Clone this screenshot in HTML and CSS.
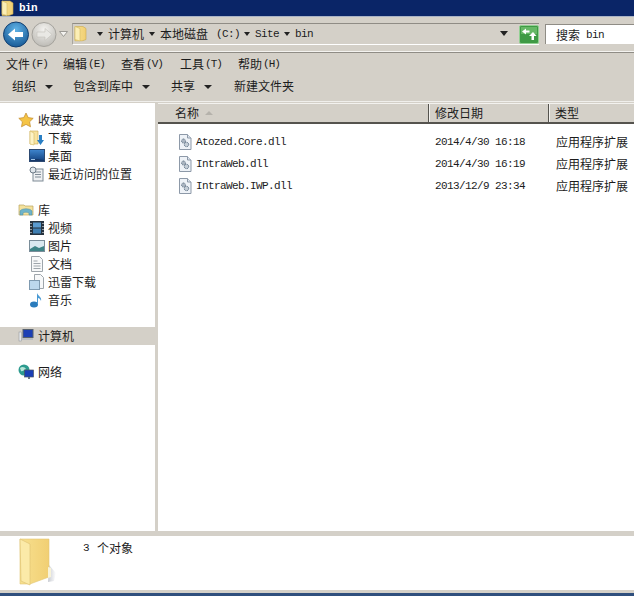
FILE: index.html
```html
<!DOCTYPE html>
<html lang="zh-CN">
<head>
<meta charset="utf-8">
<title>bin</title>
<link rel="stylesheet" href="styles.css">
</head>
<body>
<svg class="defs" width="0" height="0" aria-hidden="true">
  <defs>
    <linearGradient id="fold" x1="0" x2="1" y1="0" y2="0"><stop offset="0" stop-color="#f7e08f"/><stop offset="1" stop-color="#f1cf73"/></linearGradient>
    <linearGradient id="shadow" x1="0" x2="1" y1="0" y2="0"><stop offset="0" stop-color="#c9ccd3"/><stop offset="1" stop-color="#ffffff"/></linearGradient>
    <linearGradient id="desk" x1="0" x2="0" y1="0" y2="1"><stop offset="0" stop-color="#3f86cf"/><stop offset="1" stop-color="#123f7c"/></linearGradient>
    <radialGradient id="blue" cx=".5" cy=".3" r=".8"><stop offset="0" stop-color="#5fb2e6"/><stop offset="1" stop-color="#0f4f8c"/></radialGradient>
    <radialGradient id="grey" cx=".5" cy=".3" r=".8"><stop offset="0" stop-color="#f4f3f0"/><stop offset="1" stop-color="#b5b3ad"/></radialGradient>
    <symbol id="dll" viewBox="0 0 14 16">
      <path d="M1.500 .5h8l3.500 3.500v11.500h-11.500z" fill="#eef2f7" stroke="#8d99a8"/>
      <path d="M9.500 .5v3.500h3.500" fill="#dfe6ee" stroke="#8d99a8"/>
      <circle cx="5.500" cy="7" r="2" fill="#aab5c1" stroke="#5f7183" stroke-dasharray="1 .6"/>
      <circle cx="8.500" cy="10.500" r="2.200" fill="#c5ced7" stroke="#51667c" stroke-dasharray="1 .6"/>
    </symbol>
    <symbol id="smallfolder" viewBox="0 0 14 16">
      <path d="M1 1h8l3 2v11l-4 1.500H1z" fill="url(#fold)" stroke="#c9a94e" stroke-width=".6"/>
      <path d="M1 1l5 2v12.500l-5-1.500z" fill="#fbeeb5" stroke="#d4b862" stroke-width=".6"/>
    </symbol>
  </defs>
</svg>
<div class="window">
  <header class="titlebar">
    <svg class="title-icon" width="14" height="16" viewBox="0 0 14 16"><use href="#smallfolder"/></svg>
    <span class="title-text">bin</span>
  </header>

  <div class="addressbar">
    <svg class="nav-icon" width="26" height="27" viewBox="0 0 26 27">
      <circle cx="13" cy="13.500" r="12.500" fill="url(#blue)" stroke="#123f70"/>
      <path d="M5 13.500l7-6v3.500h8v5h-8v3.500z" fill="#fff"/>
    </svg>
    <svg class="nav-icon fwd" width="26" height="27" viewBox="0 0 26 27">
      <circle cx="13" cy="13.500" r="12" fill="url(#grey)" stroke="#a5a39d"/>
      <path d="M21 13.500l-7-6v3.500H6v5h8v3.500z" fill="#e9e8e4" stroke="#c3c1bb" stroke-width=".6"/>
    </svg>
    <svg class="nav-drop" width="9" height="6" viewBox="0 0 9 6"><path d="M.5.500h8l-4 5z" fill="#f4f3f0" stroke="#9c9a95"/></svg>
    <div class="crumbs">
      <svg class="crumb-folder" width="14" height="17" viewBox="0 0 14 16"><use href="#smallfolder"/></svg>
      <span class="arrow first"></span><span class="cjk">计算机</span>
      <span class="arrow"></span><span class="cjk">本地磁盘</span><span class="lat drive">(C:)</span>
      <span class="arrow"></span><span class="lat">Site</span>
      <span class="arrow"></span><span class="lat">bin</span>
      <span class="arrow end"></span>
      <svg class="refresh" width="20" height="19" viewBox="0 0 20 19">
        <rect x=".5" y=".5" width="19" height="18" rx="1.500" fill="#3f9a45" stroke="#93d093"/>
        <rect x="2" y="2" width="16" height="7" fill="#66b866"/>
        <path d="M3 6.500l4-3v2h3.500v2H7v2z" fill="#fff"/>
        <path d="M14 7l3.500 4H15v4h-2.500v-4H10z" fill="#fff"/>
      </svg>
    </div>
    <div class="searchbox"><span class="cjk">搜索</span><span class="lat search-term">bin</span></div>
  </div>

  <nav class="menubar">
    <span class="menu-item m1"><span class="cjk">文件</span><span class="lat">(F)</span></span>
    <span class="menu-item m2"><span class="cjk">编辑</span><span class="lat">(E)</span></span>
    <span class="menu-item m3"><span class="cjk">查看</span><span class="lat">(V)</span></span>
    <span class="menu-item m4"><span class="cjk">工具</span><span class="lat">(T)</span></span>
    <span class="menu-item"><span class="cjk">帮助</span><span class="lat">(H)</span></span>
  </nav>

  <div class="toolbar">
    <span class="tool t1"><span class="cjk">组织</span><span class="arrow big"></span></span>
    <span class="tool t2"><span class="cjk">包含到库中</span><span class="arrow big"></span></span>
    <span class="tool t3"><span class="cjk">共享</span><span class="arrow big"></span></span>
    <span class="tool"><span class="cjk">新建文件夹</span></span>
  </div>

  <div class="main">
    <aside class="sidebar">
      <div class="tree-group favs">
        <div class="tree-head">
          <svg class="tree-icon" width="16" height="16" viewBox="0 0 16 16"><path d="M8 1l2.200 4.600 5 .7-3.600 3.500.9 5L8 12.400 3.500 14.800l.9-5L.8 6.300l5-.7z" fill="#f5c445" stroke="#c08a2c" stroke-width=".7"/></svg>
          <span class="cjk">收藏夹</span>
        </div>
        <div class="tree-child">
          <svg class="tree-icon" width="16" height="16" viewBox="0 0 16 16"><path d="M1 1h8v13H1z" fill="#f7e3a0" stroke="#c9a94e" stroke-width=".6"/><path d="M1 1l4 2v12l-4-1z" fill="#fdf3c6" stroke="#d4b862" stroke-width=".6"/><path d="M10 5h3v5h2l-3.500 5L8 10h2z" fill="#2a7fc4"/></svg>
          <span class="cjk">下载</span>
        </div>
        <div class="tree-child">
          <svg class="tree-icon" width="16" height="16" viewBox="0 0 16 16"><rect x=".5" y="1.500" width="15" height="12" fill="url(#desk)" stroke="#2d4a72"/><path d="M1 13l1-2h6l7 1v1z" fill="#16386a"/><path d="M2 11.500h4" stroke="#9fc2e6"/></svg>
          <span class="cjk">桌面</span>
        </div>
        <div class="tree-child">
          <svg class="tree-icon" width="16" height="16" viewBox="0 0 16 16"><rect x="4" y="3" width="10" height="12" fill="#eef0f2" stroke="#7f8b96"/><path d="M6 6h6M6 8.500h6M6 11h6" stroke="#7f8b96"/><circle cx="4" cy="4" r="3" fill="#dfe5ea" stroke="#6d7b88"/></svg>
          <span class="cjk">最近访问的位置</span>
        </div>
      </div>

      <div class="tree-group libs">
        <div class="tree-head">
          <svg class="tree-icon" width="16" height="16" viewBox="0 0 16 16"><path d="M1 3h5l1 1h8v9H1z" fill="#f4e29d" stroke="#b9a55f" stroke-width=".7"/><path d="M2 13V9c2-3 10-3 12 0v4h-3v-2c-1-1-5-1-6 0v2z" fill="#6fb3c9" stroke="#4b8ca3" stroke-width=".5"/></svg>
          <span class="cjk">库</span>
        </div>
        <div class="tree-child">
          <svg class="tree-icon" width="16" height="16" viewBox="0 0 16 16"><rect x="1" y="1" width="14" height="14" fill="#26333f"/><rect x="4" y="2.500" width="8" height="5" fill="#5a9bd0"/><rect x="4" y="8.500" width="8" height="5" fill="#3f7fb2"/><path d="M2 3v1M2 6v1M2 9v1M2 12v1M14 3v1M14 6v1M14 9v1M14 12v1" stroke="#fff"/></svg>
          <span class="cjk">视频</span>
        </div>
        <div class="tree-child">
          <svg class="tree-icon" width="16" height="16" viewBox="0 0 16 16"><rect x=".5" y="2.500" width="15" height="11" fill="#d9e8ef" stroke="#7a8d99"/><path d="M1 11l5-3 4 2 5-2v5H1z" fill="#3e8487"/></svg>
          <span class="cjk">图片</span>
        </div>
        <div class="tree-child">
          <svg class="tree-icon" width="16" height="16" viewBox="0 0 16 16"><path d="M2.500.5h8l3 3v12h-11z" fill="#f7f8f9" stroke="#9ea5ab"/><path d="M4.500 5h4M4.500 7.500h7M4.500 10h7M4.500 12.500h7" stroke="#9ea5ab"/></svg>
          <span class="cjk">文档</span>
        </div>
        <div class="tree-child">
          <svg class="tree-icon" width="16" height="16" viewBox="0 0 16 16"><path d="M5.500.5h6l3 3v11h-9z" fill="#f7f8f9" stroke="#9ea5ab"/><rect x=".5" y="6.500" width="10" height="9" fill="#bcd7ec" stroke="#7f9ab0"/></svg>
          <span class="cjk">迅雷下载</span>
        </div>
        <div class="tree-child">
          <svg class="tree-icon" width="16" height="16" viewBox="0 0 16 16"><ellipse cx="5" cy="12.500" rx="4" ry="3" fill="#2b7cbc"/><path d="M8 12V1c1 3 5 4 4 8-.5-2-2-3-3-3v6z" fill="#4a9ad4"/></svg>
          <span class="cjk">音乐</span>
        </div>
      </div>

      <div class="tree-head selected">
        <svg class="tree-icon" width="16" height="16" viewBox="0 0 16 16"><rect x="5" y="1.500" width="10" height="8" fill="#1b3fb5" stroke="#55606e"/><path d="M4 10h11v2H4z" fill="#b9bdc2"/><rect x="1" y="4" width="2.500" height="9" fill="#e5e7ea" stroke="#8a8f96" stroke-width=".5"/></svg>
        <span class="cjk">计算机</span>
      </div>

      <div class="tree-head network">
        <svg class="tree-icon" width="16" height="16" viewBox="0 0 16 16"><circle cx="6" cy="6" r="5.500" fill="#2d9b8f"/><path d="M2 4c2-2 5-1 6 1-2 1-4 3-5 2z" fill="#b8e6d8"/><rect x="6.500" y="6" width="9" height="7" fill="#1b3fb5" stroke="#4c5663" stroke-width=".7"/><path d="M10 13h2v2h-2z" fill="#6a7480"/></svg>
        <span class="cjk">网络</span>
      </div>
    </aside>

    <section class="files">
      <div class="col-headers">
        <div class="col col-name"><span class="cjk">名称</span><span class="sort"></span></div>
        <div class="col col-date"><span class="cjk">修改日期</span></div>
        <div class="col col-type"><span class="cjk">类型</span></div>
      </div>
      <div class="rows">
        <div class="row">
          <div class="cell-name"><svg width="14" height="16" viewBox="0 0 14 16"><use href="#dll"/></svg><span class="lat">Atozed.Core.dll</span></div>
          <div class="cell-date lat">2014/4/30 16:18</div>
          <div class="cell-type cjk">应用程序扩展</div>
        </div>
        <div class="row">
          <div class="cell-name"><svg width="14" height="16" viewBox="0 0 14 16"><use href="#dll"/></svg><span class="lat">IntraWeb.dll</span></div>
          <div class="cell-date lat">2014/4/30 16:19</div>
          <div class="cell-type cjk">应用程序扩展</div>
        </div>
        <div class="row">
          <div class="cell-name"><svg width="14" height="16" viewBox="0 0 14 16"><use href="#dll"/></svg><span class="lat">IntraWeb.IWP.dll</span></div>
          <div class="cell-date lat">2013/12/9 23:34</div>
          <div class="cell-type cjk">应用程序扩展</div>
        </div>
      </div>
    </section>
  </div>

  <footer class="details">
    <svg class="details-icon" width="46" height="50" viewBox="0 0 46 50">
      <path d="M31 28l7 8-2 8-6 1z" fill="url(#shadow)"/>
      <path d="M2 2h29v38L12 47H2z" fill="url(#fold)" stroke="#e3c877" stroke-width=".6"/>
      <path d="M2 2l10 5v41L3 44z" fill="#fbeaa8" stroke="#dcc070" stroke-width=".6"/>
      <path d="M30 30l3 1v9l-3 1z" fill="#f8f3d8"/>
    </svg>
    <div class="details-text"><span class="lat">3</span><span class="cjk">个对象</span></div>
  </footer>
  <div class="taskedge"></div>
</div>
</body>
</html>
```

FILE: styles.css
```css
* { box-sizing: border-box; }
html, body { margin: 0; padding: 0; background: #fff; }
.defs { position: absolute; }
svg { display: block; flex: none; }

.window {
  width: 634px;
  height: 596px;
  display: flex;
  flex-direction: column;
  overflow: hidden;
  color: #111;
  font-family: "Noto Sans CJK SC", sans-serif;
  background: #d4d0c8;
}
.cjk { font-family: "Noto Sans CJK SC", sans-serif; font-size: 12px; line-height: 16px; white-space: nowrap; color: #1c1c1c; }
.lat { font-family: "Liberation Mono", monospace; font-size: 11px; letter-spacing: -.6px; line-height: 16px; white-space: nowrap; color: #1c1c1c; }

.titlebar {
  height: 17px;
  flex: none;
  display: flex;
  align-items: center;
  padding-left: 1px;
  background: #0a2567;
  border-bottom: 1px solid #a9b3c6;
}
.title-text { margin-left: 4px; font: bold 11px/14px "Liberation Mono", monospace; letter-spacing: -.6px; color: #fff; }

.addressbar {
  height: 35px;
  flex: none;
  display: flex;
  align-items: center;
  padding-left: 3px;
  background: #d4d0c8;
  border-bottom: 1px solid #f4f3f0;
}
.fwd { margin-left: 2px; }
.nav-drop { margin-left: 2px; margin-right: 4px; }
.crumbs {
  width: 467px;
  height: 22px;
  display: flex;
  align-items: center;
  padding-bottom: 1px;
  border-top: 1px solid #8f8c85;
  border-bottom: 1px solid #fff;
  border-left: 1px solid #a9a69f;
}
.crumb-folder { margin-left: 1px; }
.arrow {
  width: 0;
  height: 0;
  margin: 0 5px;
  border-left: 3px solid transparent;
  border-right: 3px solid transparent;
  border-top: 4px solid #222;
}
.arrow.first { margin-left: 9px; }
.drive { margin-left: 8px; margin-right: -1px; }
.arrow.end { margin-left: auto; margin-right: 11px; border-left-width: 4px; border-right-width: 4px; border-top-width: 5px; }
.refresh { margin-top: 2px; }
.searchbox {
  flex: 1;
  height: 20px;
  margin-left: 6px;
  display: flex;
  align-items: center;
  padding-left: 10px;
  background: #fff;
  border-top: 1px solid #8f8c85;
  border-left: 1px solid #8f8c85;
}
.search-term { margin-left: 6px; }

.menubar {
  height: 21px;
  flex: none;
  display: flex;
  align-items: center;
  padding: 1px 0 0 6px;
  border-top: 1px solid #8f8c85;
}
.menu-item { display: flex; align-items: center; gap: 1px; }
.menu-item .lat { width: 16px; letter-spacing: -1px; }
.m1 { margin-right: 16px; }
.m2 { margin-right: 17px; }
.m3 { margin-right: 18px; }
.m4 { margin-right: 17px; }

.toolbar {
  height: 28px;
  flex: none;
  display: flex;
  align-items: center;
  padding: 0 0 2px 12px;
}
.tool { display: flex; align-items: center; }
.tool .arrow.big { margin: 1px 0 0 9px; border-left-width: 4px; border-right-width: 4px; border-top-width: 4px; }
.t1 { margin-right: 20px; }
.t2 { margin-right: 21px; }
.t3 { margin-right: 22px; }

.main {
  height: 435px;
  flex: none;
  display: flex;
  padding-top: 1px;
  border-top: 1px solid #f0efec;
  border-bottom: 5px solid #d4d0c8;
}
.sidebar {
  width: 155px;
  flex: none;
  padding-top: 8px;
  background: #fff;
}
.tree-head, .tree-child { height: 18px; display: flex; align-items: center; }
.tree-head { padding-left: 18px; gap: 4px; }
.tree-child { padding-left: 29px; gap: 3px; }
.libs { margin-top: 18px; }
.selected { margin-top: 18px; background: #d4d0c8; }
.network { margin-top: 18px; }

.files {
  flex: 1;
  margin-left: 3px;
  display: flex;
  flex-direction: column;
  background: #fff;
}
.col-headers {
  height: 21px;
  flex: none;
  display: flex;
  background: #d4d0c8;
  border-top: 1px solid #f3f2ef;
  border-bottom: 2px solid #55534e;
}
.col { display: flex; align-items: center; height: 18px; border-left: 1px solid #f3f2ef; }
.col-name { width: 271px; padding-left: 17px; border-right: 1px solid #55534e; border-left: 0; }
.col-date { width: 120px; padding-left: 5px; border-right: 1px solid #55534e; }
.col-type { flex: 1; padding-left: 5px; }
.sort {
  margin-left: 6px;
  width: 0;
  height: 0;
  border-left: 4px solid transparent;
  border-right: 4px solid transparent;
  border-bottom: 4px solid #b5b2ab;
}

.rows { padding-top: 7px; }
.row { height: 22px; display: flex; align-items: center; padding-left: 20px; }
.cell-name { width: 257px; display: flex; align-items: center; gap: 4px; }
.cell-date { width: 121px; }
.cell-type { flex: 1; }

.details {
  height: 54px;
  flex: none;
  display: flex;
  background: #fff;
  padding-left: 18px;
}
.details-icon { margin-top: 1px; }
.details-text { display: flex; align-items: flex-start; margin-left: 19px; padding-top: 4px; gap: 8px; }
.taskedge {
  flex: 1;
  background: #d4d0c8;
  border-bottom: 3px solid #2f4f7d;
}
```
